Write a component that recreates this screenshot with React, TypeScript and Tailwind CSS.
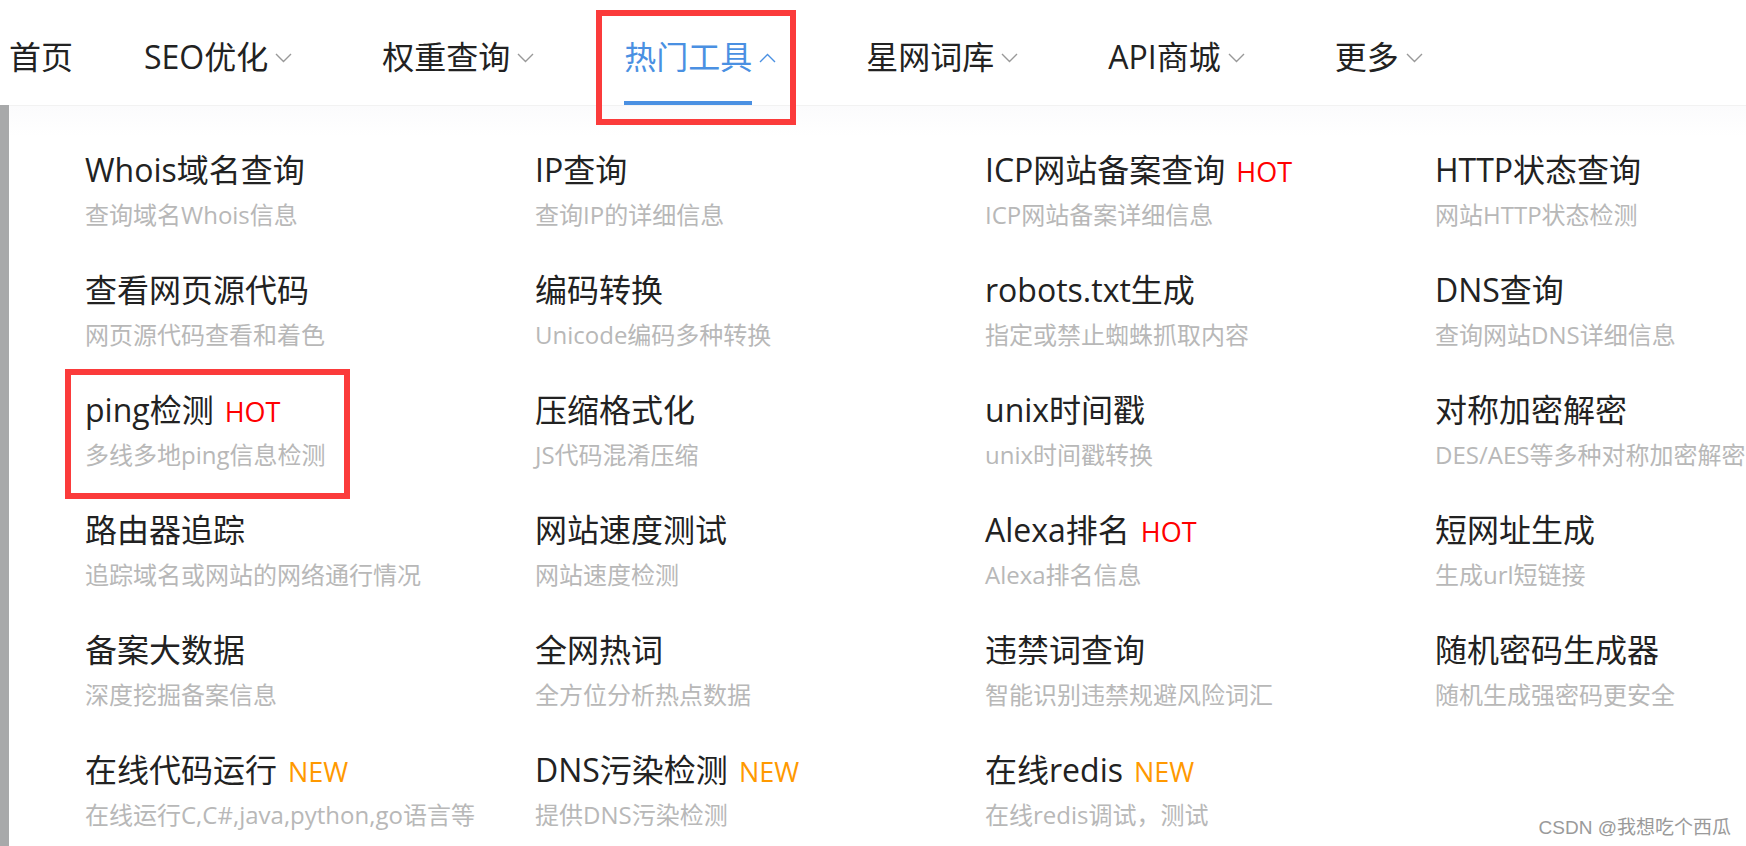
import React from "react";

type Tool = {
  title: string;
  desc: string;
  tag?: "HOT" | "NEW";
  boxed?: boolean;
};

const navItems = [
  { label: "首页", arrow: false },
  { label: "SEO优化", arrow: true },
  { label: "权重查询", arrow: true },
  { label: "热门工具", arrow: true, active: true },
  { label: "星网词库", arrow: true },
  { label: "API商城", arrow: true },
  { label: "更多", arrow: true },
];

const tools: (Tool | null)[] = [
  { title: "Whois域名查询", desc: "查询域名Whois信息" },
  { title: "IP查询", desc: "查询IP的详细信息" },
  { title: "ICP网站备案查询", desc: "ICP网站备案详细信息", tag: "HOT" },
  { title: "HTTP状态查询", desc: "网站HTTP状态检测" },
  { title: "查看网页源代码", desc: "网页源代码查看和着色" },
  { title: "编码转换", desc: "Unicode编码多种转换" },
  { title: "robots.txt生成", desc: "指定或禁止蜘蛛抓取内容" },
  { title: "DNS查询", desc: "查询网站DNS详细信息" },
  { title: "ping检测", desc: "多线多地ping信息检测", tag: "HOT", boxed: true },
  { title: "压缩格式化", desc: "JS代码混淆压缩" },
  { title: "unix时间戳", desc: "unix时间戳转换" },
  { title: "对称加密解密", desc: "DES/AES等多种对称加密解密" },
  { title: "路由器追踪", desc: "追踪域名或网站的网络通行情况" },
  { title: "网站速度测试", desc: "网站速度检测" },
  { title: "Alexa排名", desc: "Alexa排名信息", tag: "HOT" },
  { title: "短网址生成", desc: "生成url短链接" },
  { title: "备案大数据", desc: "深度挖掘备案信息" },
  { title: "全网热词", desc: "全方位分析热点数据" },
  { title: "违禁词查询", desc: "智能识别违禁规避风险词汇" },
  { title: "随机密码生成器", desc: "随机生成强密码更安全" },
  { title: "在线代码运行", desc: "在线运行C,C#,java,python,go语言等", tag: "NEW" },
  { title: "DNS污染检测", desc: "提供DNS污染检测", tag: "NEW" },
  { title: "在线redis", desc: "在线redis调试，测试", tag: "NEW" },
  null,
];

function Chevron({ up, active }: { up?: boolean; active?: boolean }) {
  return (
    <svg width="17" height="10" viewBox="0 0 17 10" className="ml-[7px] mt-[2px] shrink-0">
      <polyline
        points={up ? "1,9 8.5,1.5 16,9" : "1,1 8.5,8.5 16,1"}
        fill="none"
        stroke={active ? "#4a90e2" : "#999999"}
        strokeWidth="1.4"
      />
    </svg>
  );
}

export default function App() {
  return (
    <div className="relative h-[846px] w-[1746px] overflow-hidden bg-white font-['Open_Sans','Noto_Sans_CJK_SC',sans-serif] text-[#222]">
      <nav className="flex h-[105px] pl-[9px]">
        {navItems.map((item, i) => (
          <div
            key={item.label}
            className={`relative flex flex-col pt-[35px] ${i === 0 ? "mr-[71px]" : "mr-[90px]"}`}
          >
            <div className="flex h-[44px] items-center">
              <span
                className={`whitespace-nowrap text-[32px] leading-[44px] ${item.active ? "text-[#4a90e2]" : "text-[#222]"}`}
              >
                {item.label}
              </span>
              {item.arrow && <Chevron up={item.active} active={item.active} />}
            </div>
            {item.active && (
              <>
                <div className="mt-[22px] h-[4px] w-[128px] bg-[#4a90e2]" />
                <div className="absolute -left-[28px] top-[10px] h-[115px] w-[200px] border-[6px] border-[#fb3b3b]" />
              </>
            )}
          </div>
        ))}
      </nav>

      <div className="flex h-[741px]">
        <div className="w-[9px] shrink-0 bg-[#a8a9aa]" />
        <div className="flex-1 border-t border-[#f2f2f2] bg-gradient-to-b from-[#fbfbfc] to-white to-[30px] pl-[76px] pt-[42px]">
          <div className="grid grid-cols-[repeat(4,450px)] gap-y-[30px]">
            {tools.map((t, i) =>
              t ? (
                <div key={t.title} className="relative">
                  <div className="flex h-[44px] items-baseline whitespace-nowrap">
                    <span className="text-[32px] leading-[44px] text-[#222]">{t.title}</span>
                    {t.tag && (
                      <span
                        className={`ml-[11px] text-[27px] leading-[44px] ${t.tag === "HOT" ? "text-[#ff0000]" : "text-[#ff9900]"}`}
                      >
                        {t.tag}
                      </span>
                    )}
                  </div>
                  <div className="whitespace-nowrap text-[24px] leading-[46px] text-[#b8b8b8]">{t.desc}</div>
                  {t.boxed && (
                    <div className="absolute -left-[20px] -top-[19px] h-[130px] w-[285px] border-[6px] border-[#fb3b3b]" />
                  )}
                </div>
              ) : (
                <div key={"empty" + i} />
              )
            )}
          </div>
        </div>
      </div>

      <div className="absolute bottom-[6px] right-[15px] whitespace-nowrap font-['Liberation_Sans','Noto_Sans_CJK_SC',sans-serif] text-[19px] leading-[24px] text-[#9a9a9a] [text-shadow:0_0_1px_#fff]">
        CSDN @我想吃个西瓜
      </div>
    </div>
  );
}
